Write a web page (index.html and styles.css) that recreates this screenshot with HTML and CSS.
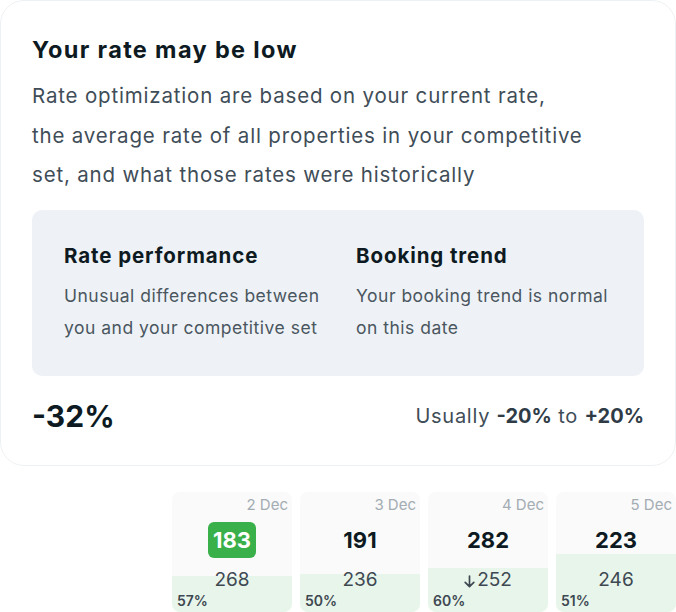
FILE: index.html
```html
<!DOCTYPE html>
<html>
<head>
<meta charset="utf-8">
<link rel="stylesheet" href="styles.css">
</head>
<body>
<div class="card">
  <h1 class="title">Your rate may be low</h1>
  <p class="lead">Rate optimization are based on your current rate,<br>the average rate of all properties in your competitive<br>set, and what those rates were historically</p>
  <div class="info">
    <div class="info-col">
      <h2 class="info-title">Rate performance</h2>
      <p class="info-text">Unusual differences between<br>you and your competitive set</p>
    </div>
    <div class="info-col">
      <h2 class="info-title">Booking trend</h2>
      <p class="info-text">Your booking trend is normal<br>on this date</p>
    </div>
  </div>
  <div class="summary">
    <span class="big">-32%</span>
    <span class="usual">Usually <b>-20%</b> to <b>+20%</b></span>
  </div>
</div>
<div class="days">
  <div class="day">
    <div class="fill" style="height:36px"></div>
    <div class="date">2 Dec</div>
    <div class="val"><span class="badge">183</span></div>
    <div class="sub">268</div>
    <div class="pct">57%</div>
  </div>
  <div class="day">
    <div class="fill" style="height:38px"></div>
    <div class="date">3 Dec</div>
    <div class="val"><span class="num">191</span></div>
    <div class="sub">236</div>
    <div class="pct">50%</div>
  </div>
  <div class="day">
    <div class="fill" style="height:44px"></div>
    <div class="date">4 Dec</div>
    <div class="val"><span class="num">282</span></div>
    <div class="sub"><svg class="arrow" width="11" height="13" viewBox="0 0 11 13"><path d="M5.5 1v10.5M1.2 7.3l4.3 4.3 4.3-4.3" fill="none" stroke="#3d4852" stroke-width="1.7" stroke-linecap="round" stroke-linejoin="round"/></svg>252</div>
    <div class="pct">60%</div>
  </div>
  <div class="day">
    <div class="fill" style="height:58px"></div>
    <div class="date">5 Dec</div>
    <div class="val"><span class="num">223</span></div>
    <div class="sub">246</div>
    <div class="pct">51%</div>
  </div>
</div>
</body>
</html>
```

FILE: styles.css
```css
* { box-sizing: border-box; }
html, body { margin: 0; padding: 0; background: #ffffff; }
body {
  width: 676px;
  height: 612px;
  overflow: hidden;
  font-family: "Inter", "Liberation Sans", sans-serif;
  color: #3d4a55;
}
.card {
  height: 466px;
  border: 1px solid #eef1f3;
  border-radius: 24px;
  padding: 34px 31px 0 31px;
  background: #fff;
}
.title {
  margin: 0;
  font-size: 23.5px;
  line-height: 30px;
  font-weight: 700;
  letter-spacing: 1.35px;
  color: #0e1a22;
  white-space: nowrap;
}
.lead {
  margin: 11px 0 0 0;
  font-size: 20.5px;
  line-height: 39.5px;
  letter-spacing: 0.82px;
  color: #3f4d58;
  white-space: nowrap;
}
.info {
  margin-top: 15px;
  background: #eef2f6;
  border-radius: 10px;
  height: 166px;
  padding: 30px 32px 0 32px;
  display: flex;
  gap: 36px;
}
.info-col { width: 256px; flex: none; }
.info-title {
  margin: 0;
  font-size: 20.5px;
  line-height: 32px;
  font-weight: 700;
  letter-spacing: 0.9px;
  color: #0e1a22;
  white-space: nowrap;
}
.info-text {
  margin: 8px 0 0 0;
  font-size: 17.5px;
  line-height: 32px;
  letter-spacing: 0.5px;
  color: #4a5660;
  white-space: nowrap;
}
.summary {
  display: flex;
  justify-content: space-between;
  align-items: center;
  margin-top: 22px;
}
.big {
  font-size: 30px;
  font-weight: 700;
  color: #0e1a22;
}
.usual {
  font-size: 20px;
  letter-spacing: 0.75px;
  color: #3f4d58;
}
.usual b { font-weight: 700; color: #2f3c47; letter-spacing: 0; }
.days {
  display: flex;
  justify-content: flex-end;
  gap: 8px;
  margin-top: 26px;
}
.day {
  position: relative;
  width: 120px;
  height: 120px;
  background: #fafafa;
  border-radius: 8px;
  overflow: hidden;
  display: flex;
  flex-direction: column;
}
.fill {
  position: absolute;
  left: 0;
  right: 0;
  bottom: 0;
  background: #e8f5ea;
}
.date, .val, .sub, .pct { position: relative; }
.date {
  text-align: right;
  padding: 4px 4px 0 0;
  font-size: 15px;
  line-height: 18px;
  color: #a3acb3;
}
.val {
  margin-top: 8px;
  height: 36px;
  display: flex;
  justify-content: center;
  align-items: center;
}
.badge {
  background: #39b04a;
  color: #fff;
  border-radius: 6px;
  width: 48px;
  height: 36px;
  display: flex;
  align-items: center;
  justify-content: center;
  font-size: 22px;
  font-weight: 700;
}
.num {
  font-size: 22px;
  font-weight: 700;
  color: #0e1a22;
}
.sub {
  margin-top: 11px;
  text-align: center;
  font-size: 19px;
  line-height: 22px;
  color: #3d4852;
  display: flex;
  justify-content: center;
  align-items: center;
  gap: 2px;
}
.arrow { margin-top: 2px; }
.pct {
  padding-left: 5px;
  margin-top: 1px;
  font-size: 14px;
  line-height: 18px;
  font-weight: 600;
  color: #3d4852;
}
```
